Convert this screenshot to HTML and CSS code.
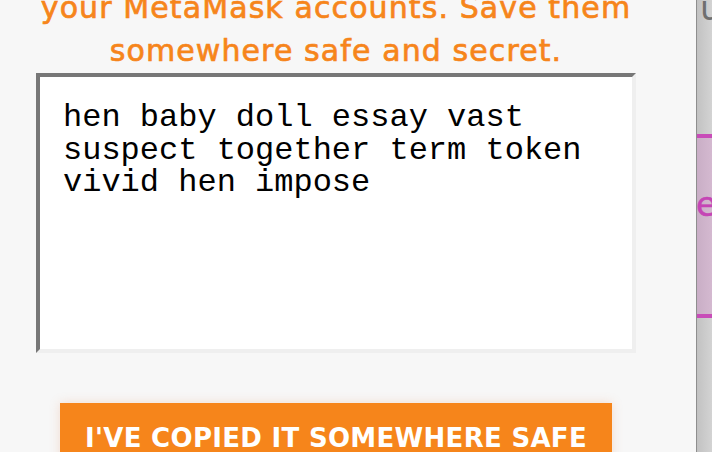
FILE: index.html
```html
<!DOCTYPE html>
<html lang="en">
<head>
<meta charset="utf-8">
<title>Seed phrase</title>
<link rel="stylesheet" href="styles.css">
</head>
<body>
<div class="app">
  <main class="popup">
    <p class="notice">your MetaMask accounts. Save them somewhere safe and secret.</p>
    <div class="seed">hen baby doll essay vast suspect together term token vivid hen impose</div>
    <button class="confirm" type="button">I'VE COPIED IT SOMEWHERE SAFE</button>
  </main>
  <aside class="behind">
    <span class="behind-top">u</span>
    <div class="behind-card"><span class="behind-letter">e</span></div>
  </aside>
</div>
</body>
</html>
```
FILE: styles.css
```css
html, body {
  margin: 0;
  padding: 0;
  height: 100%;
  overflow: hidden;
}

body {
  background: #f7f7f7;
  font-family: "DejaVu Sans", "Noto Sans", sans-serif;
}

.app {
  display: flex;
  height: 452px;
  overflow: hidden;
}

.popup {
  width: 696px;
  flex: none;
  box-sizing: border-box;
  padding-right: 24px;
  display: flex;
  flex-direction: column;
  align-items: center;
  background: #f7f7f7;
}

.notice {
  margin: -14px 0 0;
  width: 650px;
  text-align: center;
  color: #f6851b;
  font-size: 30px;
  line-height: 43px;
  letter-spacing: 1.1px;
  -webkit-text-stroke: 0.7px #f6851b;
}

.seed {
  margin-top: 1px;
  width: 600px;
  height: 280px;
  box-sizing: border-box;
  flex: none;
  border: 4px solid;
  border-color: #777777 #efefef #efefef #777777;
  background: #ffffff;
  padding: 25px 23px 21px;
  font-family: "Courier New", "Liberation Mono", monospace;
  font-size: 32px;
  line-height: 32.5px;
  color: #000000;
}

.confirm {
  margin-top: 50px;
  width: 552px;
  flex: none;
  border: none;
  background: #f6851b;
  color: #ffffff;
  font-family: "DejaVu Sans", sans-serif;
  font-weight: bold;
  font-size: 26px;
  line-height: 26px;
  letter-spacing: 0.3px;
  padding: 22px 0 22px;
  box-shadow: 0 0 10px rgba(230, 140, 90, 0.25);
  text-align: center;
}

.behind {
  flex: 1;
  display: flex;
  flex-direction: column;
  background: linear-gradient(to right, #c2c2c2, #d3d3d3);
  border-left: 1px solid #8e8e8e;
  overflow: hidden;
}

.behind-top {
  display: block;
  margin: -12px 0 0 3px;
  color: #6f6f6f;
  font-size: 34px;
  line-height: 40px;
}

.behind-card {
  margin-top: 106px;
  height: 176px;
  border-top: 4px solid #c84cb8;
  border-bottom: 4px solid #c84cb8;
  background: linear-gradient(to right, #c9aec6, #d4b9d0);
  overflow: hidden;
}

.behind-letter {
  display: block;
  margin: 46px 0 0 -1px;
  color: #c545b5;
  font-size: 34px;
  line-height: 40px;
  -webkit-text-stroke: 0.5px #c545b5;
}
```
